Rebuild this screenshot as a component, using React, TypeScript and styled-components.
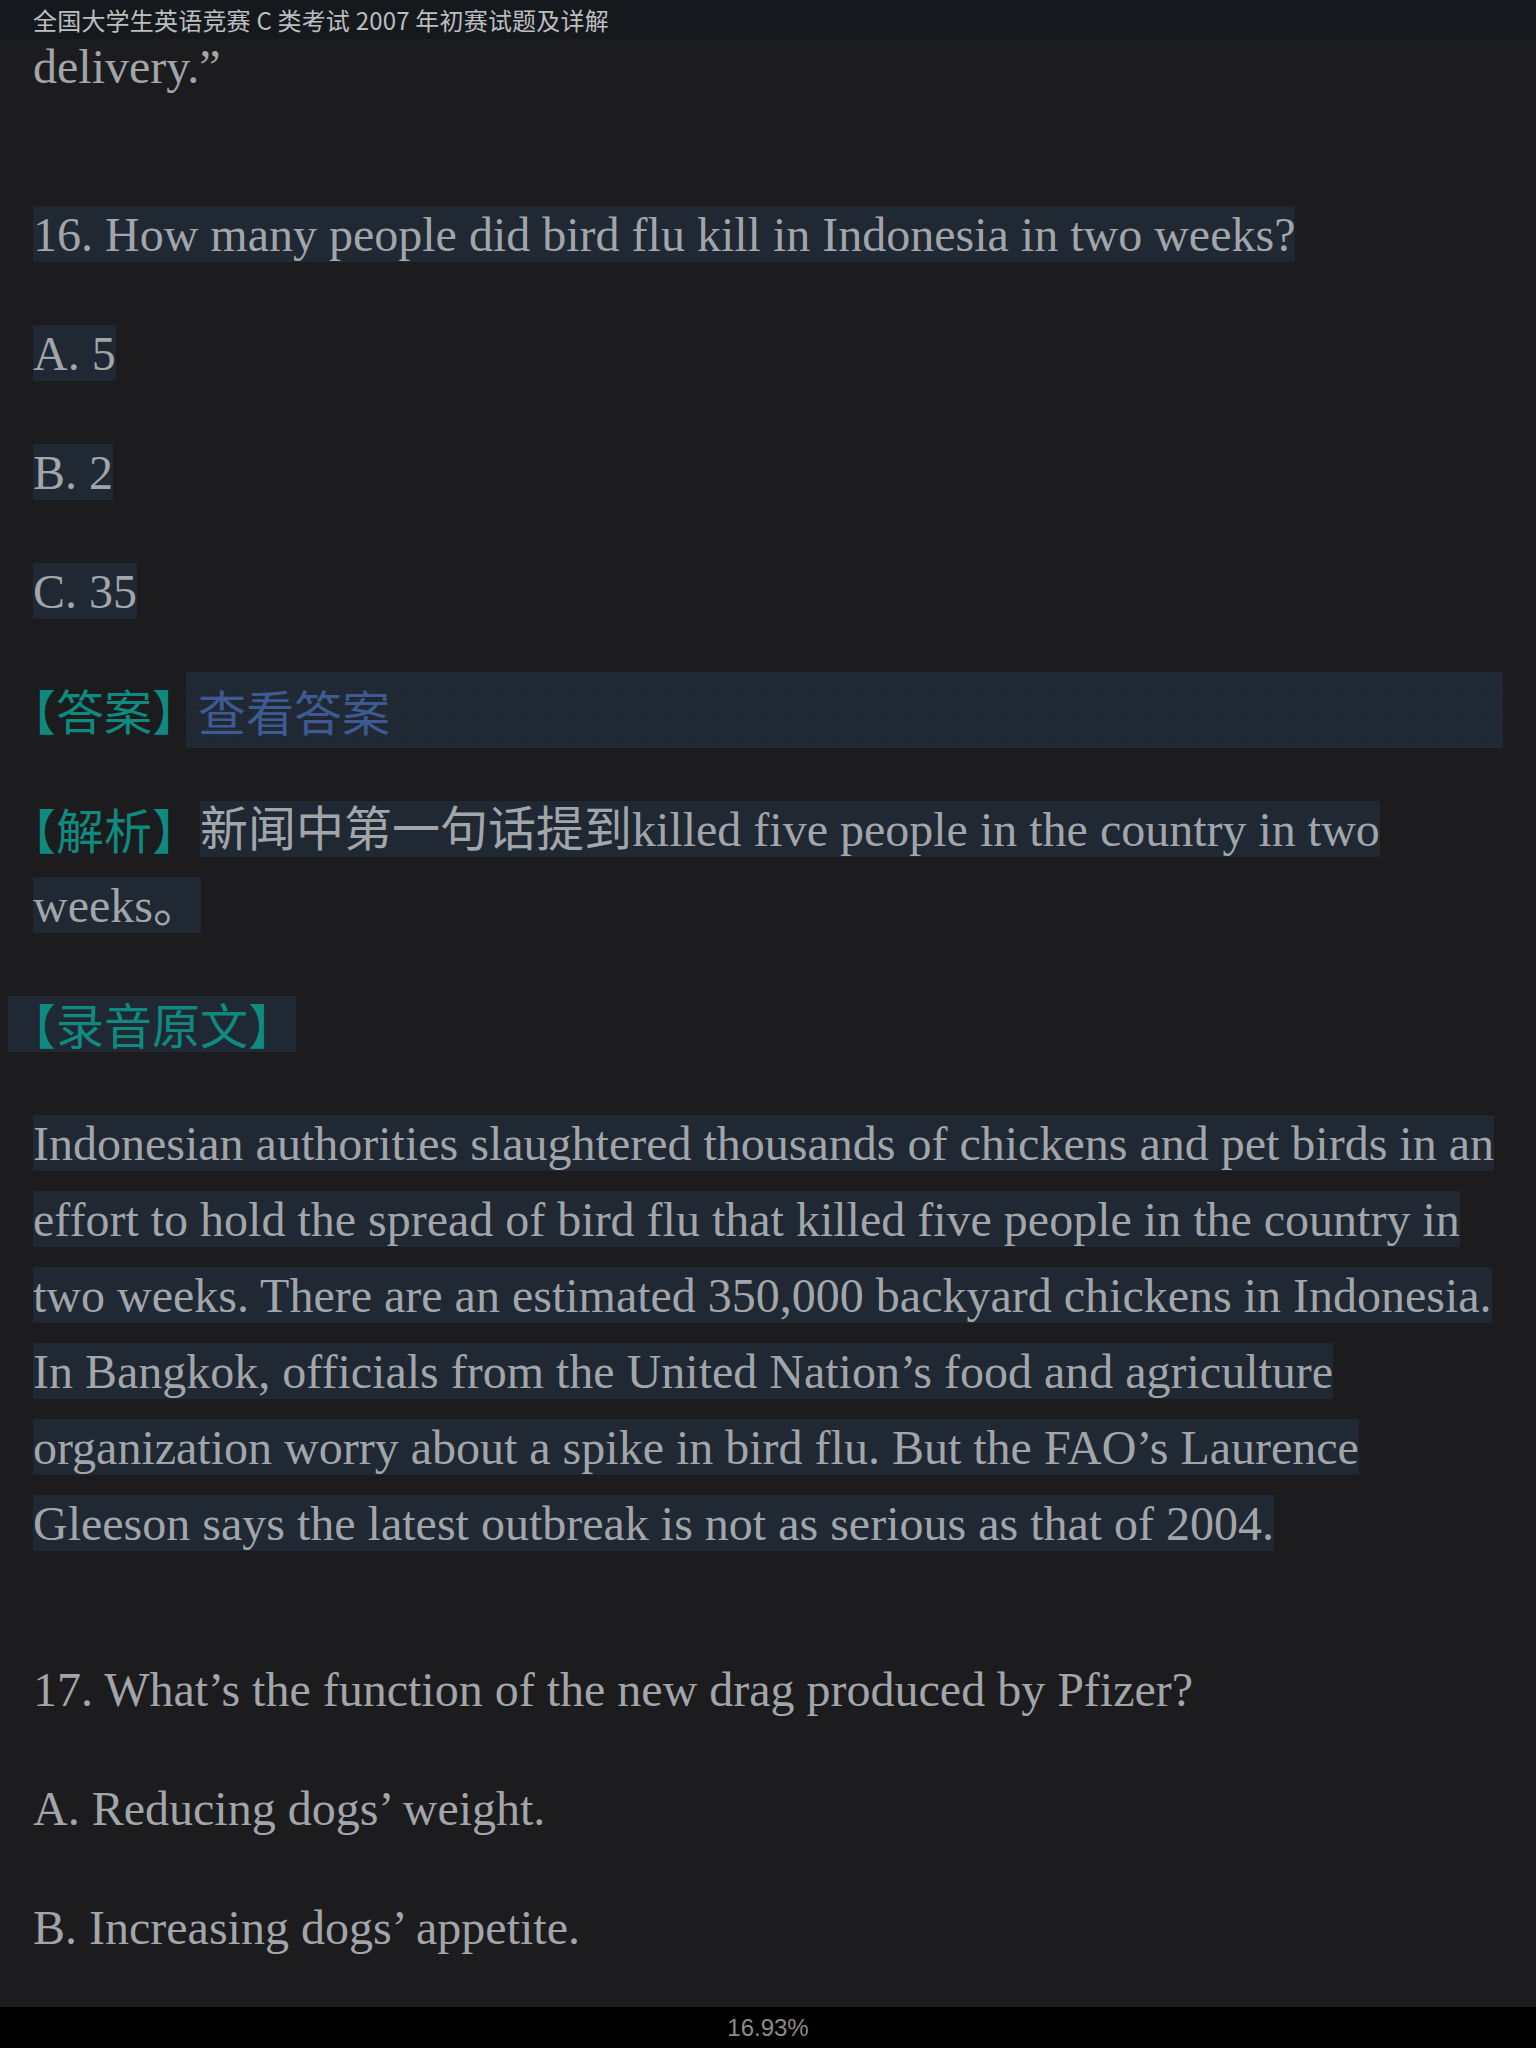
import React from "react"
import styled, { createGlobalStyle } from "styled-components"

const GlobalStyle = createGlobalStyle`
  html, body {
    margin: 0;
    padding: 0;
    background: #1c1c1e;
  }
`

const serif = `"Liberation Serif", "Noto Sans CJK SC", serif`
const cjk = `"Noto Sans CJK SC", "Liberation Sans", sans-serif`

const question16 = {
  title: "16. How many people did bird flu kill in Indonesia in two weeks?",
  options: ["A. 5", "B. 2", "C. 35"],
}

const transcript = [
  "Indonesian authorities slaughtered thousands of chickens and pet birds in an effort to hold the spread of bird flu that killed five people in the country in two weeks.",
  "There are an estimated 350,000 backyard chickens in Indonesia.",
  "In Bangkok, officials from the United Nation’s food and agriculture organization worry about a spike in bird flu.",
  "But the FAO’s Laurence Gleeson says the latest outbreak is not as serious as that of 2004.",
]

const question17 = {
  title: "17. What’s the function of the new drag produced by Pfizer?",
  options: ["A. Reducing dogs’ weight.", "B. Increasing dogs’ appetite."],
}

const App = () => {
  return (
    <>
      <GlobalStyle />
      <Page>
        <TopBar>
          <Title>全国大学生英语竞赛 C 类考试 2007 年初赛试题及详解</Title>
        </TopBar>

        <Reader>
          <Scroll>
            <Para>delivery.”</Para>

            <Para $question>
              <Mark>{question16.title}</Mark>
            </Para>
            {question16.options.map(opt => (
              <Para key={opt}>
                <Mark>{opt}</Mark>
              </Para>
            ))}

            <AnswerRow>
              <Tag>【答案】</Tag>
              <RevealBox>查看答案</RevealBox>
            </AnswerRow>

            <Para>
              <Tag>【解析】</Tag>
              <Mark>新闻中第一句话提到killed five people in the country in two weeks。</Mark>
            </Para>

            <Para>
              <Tag $marked>【录音原文】</Tag>
            </Para>

            <Para>
              <Mark>{transcript.join(" ")}</Mark>
            </Para>

            <Para $question>{question17.title}</Para>
            {question17.options.map(opt => (
              <Para key={opt}>{opt}</Para>
            ))}
          </Scroll>
        </Reader>

        <BottomBar>
          <Progress>16.93%</Progress>
        </BottomBar>
      </Page>
    </>
  )
}

export default App

const Page = styled.div`
  display: flex;
  flex-direction: column;
  width: 1536px;
  height: 2048px;
  overflow: hidden;
  background: #1c1c1e;
`
const TopBar = styled.header`
  flex: 0 0 39px;
  display: flex;
  align-items: center;
  padding: 0 33px;
  background: #15191e;
`
const Title = styled.div`
  font-family: ${cjk};
  font-size: 24px;
  color: #bdbec0;
  letter-spacing: 0.2px;
  white-space: nowrap;
`
const Reader = styled.main`
  flex: 1;
  overflow: hidden;
`
// the page is scrolled a little: the first line sits partly under the top bar
const Scroll = styled.div`
  margin-top: -10px;
  padding: 0 33px;
`
const Para = styled.p<{ $question?: boolean }>`
  margin: ${p => (p.$question ? "91px" : "0")} 0 43px;
  font-family: ${serif};
  font-size: 48px;
  line-height: 76px;
  color: #a2a5aa;
`
const Mark = styled.span`
  background: #1f2833;
  padding: 1.5px 0;
  -webkit-box-decoration-break: clone;
  box-decoration-break: clone;
`
const Tag = styled.span<{ $marked?: boolean }>`
  display: inline-block;
  vertical-align: top;
  height: 56px;
  margin: 10px 0 10px -25px;
  font-family: ${cjk};
  font-size: 48px;
  line-height: 54px;
  color: #0e8a80;
  background: ${p => (p.$marked ? "#1f2833" : "transparent")};
`
const AnswerRow = styled.div`
  display: flex;
  align-items: center;
  height: 76px;
  margin-bottom: 43px;
  font-size: 48px;
  line-height: 76px;
`
const RevealBox = styled.div`
  flex: 1;
  height: 76px;
  margin-left: -14px;
  padding-left: 12px;
  font-family: ${cjk};
  color: #3d5a92;
  background-color: #1e2631;
  background-image: linear-gradient(rgba(255, 255, 255, 0.02) 1px, transparent 1px),
    linear-gradient(90deg, rgba(255, 255, 255, 0.02) 1px, transparent 1px);
  background-size: 3px 3px;
`
const BottomBar = styled.footer`
  flex: 0 0 41px;
  display: flex;
  align-items: center;
  justify-content: center;
  background: #000;
`
const Progress = styled.div`
  font-family: "Liberation Sans", Arial, sans-serif;
  font-size: 24px;
  color: #8c8c8c;
`
